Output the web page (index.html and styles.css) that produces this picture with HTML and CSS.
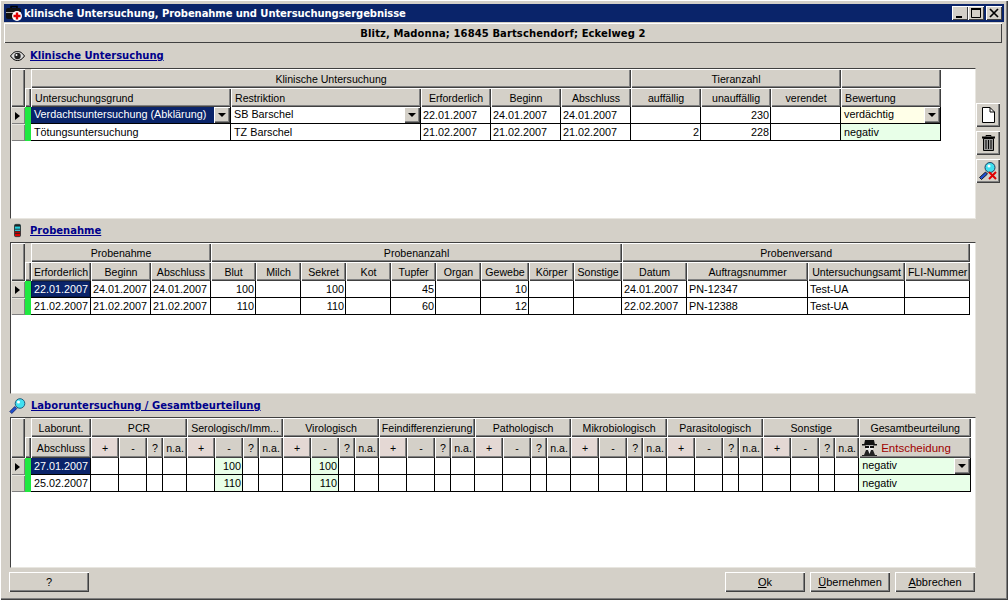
FILE: index.html
```html
<!DOCTYPE html>
<html lang="de">
<head>
  <meta charset="UTF-8">
  <title>klinische Untersuchung, Probenahme und Untersuchungsergebnisse</title>
  <link rel="stylesheet" href="styles.css">
</head>
<body>
<div class="window">
  <div class="titlebar">
    <svg class="app-icon" width="16" height="16" viewBox="0 0 16 16">
      <path d="M5 3V1.500h6V3" fill="none" stroke="#000" stroke-width="1.500"/>
      <rect x="0" y="3" width="15" height="11" rx="2" fill="#111"/>
      <rect x="0" y="7" width="15" height="1" fill="#aaa"/>
      <circle cx="11" cy="11" r="5" fill="#fff"/>
      <path d="M9.800 7.500h2.400v2.300h2.300v2.400h-2.300v2.300H9.800v-2.300H7.500V9.800h2.300z" fill="#e00000"/>
    </svg>
    <span class="title-text">klinische Untersuchung, Probenahme und Untersuchungsergebnisse</span>
    <div class="caption-btns">
      <button class="caption-btn"><svg width="14" height="12" viewBox="0 0 14 12"><rect x="3" y="9" width="6" height="2" fill="#000"/></svg></button>
      <button class="caption-btn"><svg width="14" height="12" viewBox="0 0 14 12"><path d="M2.500 1.500h9v9h-9z M2 2.500h10" fill="none" stroke="#000"/><rect x="2" y="1" width="10" height="2" fill="#000"/></svg></button>
      <button class="caption-btn close"><svg width="14" height="12" viewBox="0 0 14 12"><path d="M3 2l8 8M11 2l-8 8" stroke="#000" stroke-width="1.700"/></svg></button>
    </div>
  </div>

  <div class="patient">Blitz, Madonna; 16845 Bartschendorf; Eckelweg 2</div>

  <!-- Klinische Untersuchung -->
  <div class="section-head head-first">
    <span class="sec-icon">
      <svg width="15" height="10" viewBox="0 0 15 10">
        <path d="M0.500 5C3 1.500 5 .5 7.500 .5S12 1.500 14.500 5C12 8.500 10 9.500 7.500 9.500S3 8.500 .5 5z" fill="#ddd" stroke="#000"/>
        <circle cx="7.500" cy="5" r="3.200" fill="#222"/>
        <circle cx="6.500" cy="4" r="1" fill="#fff"/>
      </svg>
    </span>
    <a class="sec-title" href="#">Klinische Untersuchung</a>
  </div>
  <div class="section-row">
    <div class="panel p1">
      <table class="grid">
        <colgroup>
          <col class="w14"><col class="w6"><col class="w200"><col class="w190">
          <col class="w70"><col class="w70"><col class="w70"><col class="w70"><col class="w70"><col class="w70"><col class="w100">
        </colgroup>
        <tr class="hr1">
          <th class="ind" rowspan="2"></th><th class="flat"></th>
          <th colspan="5">Klinische Untersuchung</th>
          <th colspan="3">Tieranzahl</th>
          <th></th>
        </tr>
        <tr class="hr2">
          <th></th>
          <th class="left">Untersuchungsgrund</th><th class="left">Restriktion</th>
          <th>Erforderlich</th><th>Beginn</th><th>Abschluss</th>
          <th>auffällig</th><th>unauffällig</th><th>verendet</th>
          <th class="left">Bewertung</th>
        </tr>
        <tr>
          <td class="ind"><span class="arrow"></span></td><td class="mark"></td>
          <td class="combo sel"><div class="combo-in"><span>Verdachtsuntersuchung (Abklärung)</span><span class="drop"></span></div></td>
          <td class="combo"><div class="combo-in"><span>SB Barschel</span><span class="drop"></span></div></td>
          <td>22.01.2007</td><td>24.01.2007</td><td>24.01.2007</td>
          <td class="num"></td><td class="num">230</td><td class="num"></td>
          <td class="combo yellow"><div class="combo-in"><span>verdächtig</span><span class="drop"></span></div></td>
        </tr>
        <tr>
          <td class="ind"></td><td class="mark"></td>
          <td class="pad">Tötungsuntersuchung</td><td class="pad">TZ Barschel</td>
          <td>21.02.2007</td><td>21.02.2007</td><td>21.02.2007</td>
          <td class="num">2</td><td class="num">228</td><td class="num"></td>
          <td class="pad green">negativ</td>
        </tr>
      </table>
    </div>
    <div class="tools">
      <button class="tool-btn">
        <svg width="13" height="16" viewBox="0 0 13 16"><path d="M.5 .5h7.500l4.500 4.500v10.500H.5z" fill="#fff" stroke="#000"/><path d="M8 .5V5h4.500" fill="none" stroke="#000"/></svg>
      </button>
      <button class="tool-btn">
        <svg width="13" height="16" viewBox="0 0 13 16"><path d="M0 2.500h13" stroke="#000" stroke-width="2"/><path d="M4 1.500V.5h5v1" fill="none" stroke="#000"/><path d="M1.500 3.500h10v12h-10z" fill="#999" stroke="#000"/><path d="M4 5v9M6.500 5v9M9 5v9" stroke="#000"/></svg>
      </button>
      <button class="tool-btn">
        <svg width="20" height="20" viewBox="0 0 20 20">
          <path d="M1.500 16.500l6-5.500 2 2-6 5.500z" fill="#2050d0" stroke="#000" stroke-width=".8"/>
          <circle cx="12" cy="6.500" r="5" fill="#40e0f0" stroke="#204060"/>
          <circle cx="11" cy="5" r="1.500" fill="#fff"/>
          <path d="M11 11l7 7M18 11l-7 7" stroke="#e00000" stroke-width="2"/>
        </svg>
      </button>
    </div>
  </div>

  <!-- Probenahme -->
  <div class="section-head">
    <span class="sec-icon">
      <svg width="7" height="15" viewBox="0 0 8 15">
        <rect x=".5" y=".5" width="7" height="14" rx="1.500" fill="#20d0e0" stroke="#222"/>
        <rect x="1" y="1" width="6" height="2" fill="#222"/>
        <rect x="1" y="8" width="6" height="6" fill="#e00000"/>
        <path d="M1 6h6M1 9h6M1 11h6" stroke="#222"/>
      </svg>
    </span>
    <a class="sec-title" href="#">Probenahme</a>
  </div>
  <div class="section-row">
    <div class="panel p2">
      <table class="grid">
        <colgroup>
          <col class="w14"><col class="w6"><col class="w60"><col class="w60"><col class="w60">
          <col class="w45"><col class="w45"><col class="w45"><col class="w45"><col class="w45"><col class="w45"><col class="w48"><col class="w45"><col class="w48">
          <col class="w65"><col class="w121"><col class="w97"><col class="w65">
        </colgroup>
        <tr class="hr1">
          <th class="ind" rowspan="2"></th><th class="flat"></th>
          <th colspan="3">Probenahme</th>
          <th colspan="9">Probenanzahl</th>
          <th colspan="4">Probenversand</th>
        </tr>
        <tr class="hr2">
          <th></th>
          <th>Erforderlich</th><th>Beginn</th><th>Abschluss</th>
          <th>Blut</th><th>Milch</th><th>Sekret</th><th>Kot</th><th>Tupfer</th><th>Organ</th><th>Gewebe</th><th>Körper</th><th>Sonstige</th>
          <th>Datum</th><th>Auftragsnummer</th><th>Untersuchungsamt</th><th>FLI-Nummer</th>
        </tr>
        <tr>
          <td class="ind"><span class="arrow"></span></td><td class="mark"></td>
          <td class="sel pad">22.01.2007</td><td>24.01.2007</td><td>24.01.2007</td>
          <td class="num">100</td><td></td><td class="num">100</td><td></td><td class="num">45</td><td></td><td class="num">10</td><td></td><td></td>
          <td>24.01.2007</td><td>PN-12347</td><td>Test-UA</td><td></td>
        </tr>
        <tr>
          <td class="ind"></td><td class="mark"></td>
          <td class="pad">21.02.2007</td><td>21.02.2007</td><td>21.02.2007</td>
          <td class="num">110</td><td></td><td class="num">110</td><td></td><td class="num">60</td><td></td><td class="num">12</td><td></td><td></td>
          <td>22.02.2007</td><td>PN-12388</td><td>Test-UA</td><td></td>
        </tr>
      </table>
    </div>
  </div>

  <!-- Laboruntersuchung -->
  <div class="section-head">
    <span class="sec-icon">
      <svg width="17" height="16" viewBox="0 0 17 16">
        <path d="M0.800 13.500l5-5 2 2-5 5z" fill="#2050d0" stroke="#102060" stroke-width=".8"/>
        <circle cx="11" cy="5.500" r="4.800" fill="#40e0f0" stroke="#206080"/>
        <circle cx="9.500" cy="4" r="1.500" fill="#fff"/>
      </svg>
    </span>
    <a class="sec-title lab" href="#">Laboruntersuchung / Gesamtbeurteilung</a>
  </div>
  <div class="section-row">
    <div class="panel p3">
      <table class="grid">
        <colgroup>
          <col class="w14"><col class="w6"><col class="w60">
          <col class="w28"><col class="w28"><col class="w16"><col class="w24">
          <col class="w28"><col class="w28"><col class="w16"><col class="w24">
          <col class="w28"><col class="w28"><col class="w16"><col class="w24">
          <col class="w28"><col class="w28"><col class="w16"><col class="w24">
          <col class="w28"><col class="w28"><col class="w16"><col class="w24">
          <col class="w28"><col class="w28"><col class="w16"><col class="w24">
          <col class="w28"><col class="w28"><col class="w16"><col class="w24">
          <col class="w28"><col class="w28"><col class="w16"><col class="w24">
          <col class="w112">
        </colgroup>
        <tr class="hr1">
          <th class="ind" rowspan="2"></th><th class="flat"></th>
          <th>Laborunt.</th>
          <th colspan="4">PCR</th>
          <th colspan="4">Serologisch/Imm...</th>
          <th colspan="4">Virologisch</th>
          <th colspan="4">Feindifferenzierung</th>
          <th colspan="4">Pathologisch</th>
          <th colspan="4">Mikrobiologisch</th>
          <th colspan="4">Parasitologisch</th>
          <th colspan="4">Sonstige</th>
          <th>Gesamtbeurteilung</th>
        </tr>
        <tr class="hr3">
          <th></th>
          <th>Abschluss</th>
          <th class="plus">+</th><th>-</th><th>?</th><th>n.a.</th>
          <th class="plus">+</th><th>-</th><th>?</th><th>n.a.</th>
          <th class="plus">+</th><th>-</th><th>?</th><th>n.a.</th>
          <th class="plus">+</th><th>-</th><th>?</th><th>n.a.</th>
          <th class="plus">+</th><th>-</th><th>?</th><th>n.a.</th>
          <th class="plus">+</th><th>-</th><th>?</th><th>n.a.</th>
          <th class="plus">+</th><th>-</th><th>?</th><th>n.a.</th>
          <th class="plus">+</th><th>-</th><th>?</th><th>n.a.</th>
          <th class="left decision">
            <div class="decision-in">
              <svg width="17" height="17" viewBox="0 0 17 17">
                <path d="M4 1h9l1 5H3z" fill="#111"/>
                <rect x="1" y="5" width="15" height="1.500" fill="#111"/>
                <rect x="5" y="6.500" width="7" height="4" fill="#eee"/>
                <rect x="4" y="7" width="4" height="2" fill="#111"/>
                <rect x="9" y="7" width="4" height="2" fill="#111"/>
                <path d="M3 16l2-5h7l2 5h2v1H1v-1z" fill="#222"/>
                <path d="M7 11h3l-1.500 4z" fill="#eee"/>
              </svg>
              <span>Entscheidung</span>
            </div>
          </th>
        </tr>
        <tr>
          <td class="ind"><span class="arrow"></span></td><td class="mark"></td>
          <td class="sel-flat pad">27.01.2007</td>
          <td></td><td></td><td></td><td></td>
          <td></td><td class="num green">100</td><td></td><td></td>
          <td></td><td class="num green">100</td><td></td><td></td>
          <td></td><td></td><td></td><td></td>
          <td></td><td></td><td></td><td></td>
          <td></td><td></td><td></td><td></td>
          <td></td><td></td><td></td><td></td>
          <td></td><td></td><td></td><td></td>
          <td class="combo green"><div class="combo-in"><span>negativ</span><span class="drop"></span></div></td>
        </tr>
        <tr>
          <td class="ind"></td><td class="mark"></td>
          <td class="pad">25.02.2007</td>
          <td></td><td></td><td></td><td></td>
          <td></td><td class="num green">110</td><td></td><td></td>
          <td></td><td class="num green">110</td><td></td><td></td>
          <td></td><td></td><td></td><td></td>
          <td></td><td></td><td></td><td></td>
          <td></td><td></td><td></td><td></td>
          <td></td><td></td><td></td><td></td>
          <td></td><td></td><td></td><td></td>
          <td class="pad green">negativ</td>
        </tr>
      </table>
    </div>
  </div>

  <div class="footer">
    <button class="btn">?</button>
    <div class="footer-right">
      <button class="btn"><u>O</u>k</button>
      <button class="btn"><u>Ü</u>bernehmen</button>
      <button class="btn"><u>A</u>bbrechen</button>
    </div>
  </div>
</div>
</body>
</html>
```

FILE: styles.css
```css
* { box-sizing: border-box; }
html, body { margin: 0; padding: 0; background: #d4d0c8; }
body { font-family: "Liberation Sans", Arial, sans-serif; font-size: 11px; color: #000; }
button { font: inherit; color: inherit; padding: 0; background: #d4d0c8; border: 0; }

.window {
  width: 1008px; height: 600px; padding: 4px;
  display: flex; flex-direction: column;
  background: #d4d0c8;
  box-shadow: inset 1px 1px 0 #fff, inset -1px -1px 0 #404040, inset -2px -2px 0 #808080;
}

/* title bar */
.titlebar { height: 18px; background: #0a246a; color: #fff; display: flex; align-items: center; padding: 0 2px; }
.app-icon { margin-right: 2px; flex: none; }
.title-text { font-family: "DejaVu Sans", sans-serif; font-weight: bold; font-size: 10px; letter-spacing: -.08px; white-space: nowrap; }
.caption-btns { margin-left: auto; display: flex; }
.caption-btn {
  width: 16px; height: 14px; display: flex; align-items: center; justify-content: center;
  box-shadow: inset 1px 1px 0 #fff, inset -1px -1px 0 #404040;
}
.caption-btn.close { margin-left: 2px; }

.patient {
  height: 20px; margin-top: 1px; margin-right: 2px;
  font-family: "DejaVu Sans", sans-serif; font-weight: bold; font-size: 10px; letter-spacing: .1px;
  display: flex; align-items: center; justify-content: center;
  box-shadow: inset 1px 1px 0 #fff, inset -1px -1px 0 #404040;
}

/* sections */
.section-head { height: 23px; display: flex; align-items: center; padding-left: 6px; }
.section-head.head-first { height: 25px; }
.sec-icon { width: 20px; display: flex; justify-content: center; padding-right: 5px; }
.sec-icon svg { flex: none; }
.sec-title { font-family: "DejaVu Sans", sans-serif; font-weight: bold; font-size: 10px; color: #00008b; text-decoration: underline; }
.sec-title.lab { margin-left: 1px; }

.section-row { display: flex; padding-left: 6px; }
.panel {
  width: 966px; background: #fff; overflow: hidden;
  border-top: 1px solid #404040; border-left: 1px solid #404040;
  border-right: 1px solid #e8e6e0; border-bottom: 1px solid #e8e6e0;
}
.p1 { height: 151px; }
.p2 { height: 152px; }
.p3 { height: 151px; }

.tools { display: flex; flex-direction: column; gap: 4px; padding-top: 35px; }
.tool-btn {
  width: 24px; height: 24px; display: flex; align-items: center; justify-content: center;
  box-shadow: inset 1px 1px 0 #fff, inset -1px -1px 0 #404040, inset -2px -2px 0 #808080;
}

/* grids */
.grid { border-collapse: separate; border-spacing: 0; table-layout: fixed; width: 1px; }
.w6 { width: 6px; } .w14 { width: 14px; } .w16 { width: 16px; } .w24 { width: 24px; }
.w28 { width: 28px; } .w45 { width: 45px; } .w48 { width: 48px; } .w60 { width: 60px; }
.w65 { width: 65px; } .w70 { width: 70px; } .w97 { width: 97px; } .w100 { width: 100px; }
.w112 { width: 112px; } .w121 { width: 121px; } .w190 { width: 190px; } .w200 { width: 200px; }

.grid th {
  background: #d4d0c8; font-weight: normal; font-size: 10.600px; padding: 0 2px; overflow: hidden; white-space: nowrap; text-align: center;
  box-shadow: inset 1px 1px 0 #fff, inset -1px -1px 0 #404040, inset -2px -2px 0 #808080;
}
.grid th.flat { box-shadow: inset -1px 0 0 #d4d0c8; }
.grid th.left { text-align: left; padding-left: 4px; }
.grid th.plus { background: #e4d8d4; }
.hr1 { height: 19px; }
.hr2 { height: 19px; }
.hr3 { height: 21px; }

.grid td {
  height: 17px; padding: 0 2px; font-size: 10.800px; line-height: 15px; background: #fff; overflow: hidden; white-space: nowrap;
  border-right: 1px solid #000; border-bottom: 1px solid #000;
}
.grid td.ind {
  background: #d4d0c8; padding: 0 0 0 4px; border: 0;
  box-shadow: inset 1px 1px 0 #e8e6e0, inset -1px -1px 0 #808080;
}
.grid td.mark { background: #20e840; padding: 0; border-right: 0; border-bottom: 0; }
.arrow { display: block; width: 0; height: 0; border-left: 5px solid #000; border-top: 4px solid transparent; border-bottom: 4px solid transparent; }
.grid td.pad { padding-left: 3px; }
.grid td.num { text-align: right; padding-right: 1px; }
.grid td.green { background: #e8ffe8; }
.grid td.yellow { background: #ffffe8; }
.grid td.sel, .grid td.sel-flat { color: #fff; background: #0a246a; }
.grid td.sel.pad { box-shadow: inset 0 0 0 1px #061a50; }

.grid td.combo { padding: 0; }
.grid td.combo.sel { background: #fff; }
.combo-in { display: flex; align-items: stretch; height: 16px; }
.combo-in > span:first-child { flex: 1; padding-left: 3px; line-height: 15px; overflow: hidden; }
.sel .combo-in > span:first-child { background: #0a246a; }
.drop {
  width: 16px; flex: none; background: #d4d0c8; position: relative;
  box-shadow: inset 1px 1px 0 #fff, inset -1px -1px 0 #404040, inset -2px -2px 0 #808080;
}
.drop::after {
  content: ""; position: absolute; left: 4px; top: 6px; width: 0; height: 0;
  border-top: 4px solid #000; border-left: 4px solid transparent; border-right: 4px solid transparent;
}
.decision-in { display: flex; align-items: center; gap: 3px; color: #a00000; font-size: 11.500px; margin-left: -2px; }

/* footer */
.footer { display: flex; justify-content: space-between; padding: 4px 29px 0 5px; }
.footer-right { display: flex; gap: 5px; }
.btn {
  width: 80px; height: 20px; text-align: center;
  box-shadow: inset 1px 1px 0 #fff, inset -1px -1px 0 #404040, inset -2px -2px 0 #808080;
}
```
